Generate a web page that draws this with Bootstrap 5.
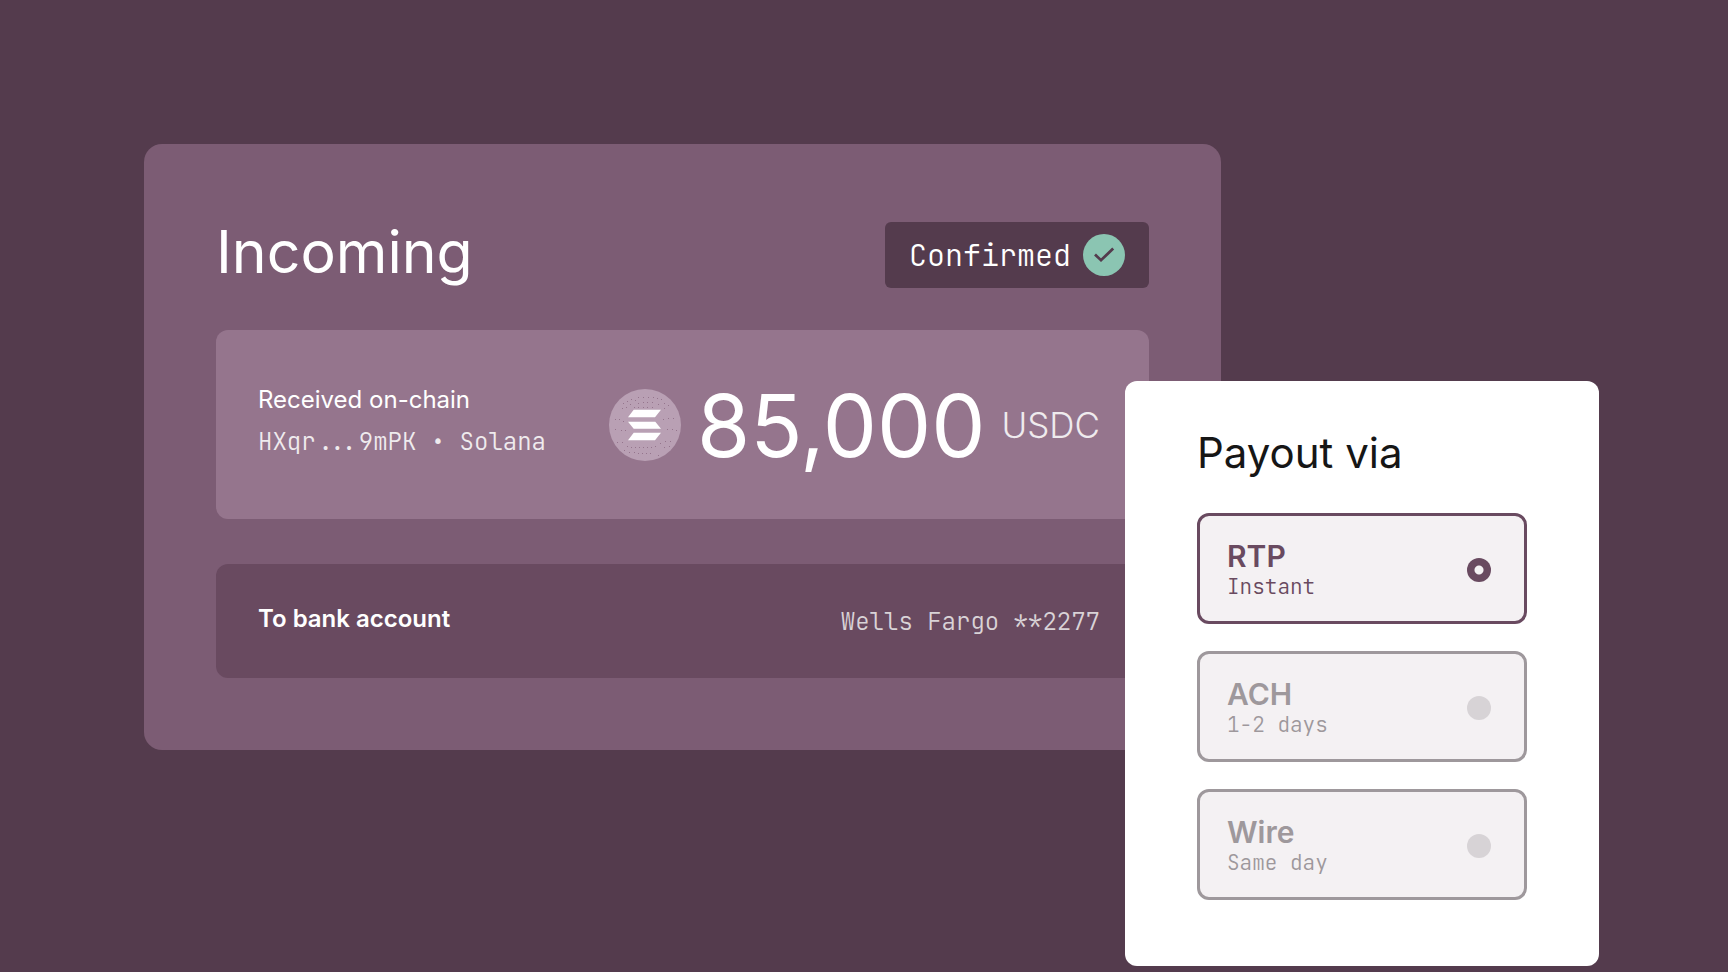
<!DOCTYPE html>
<html lang="en">
<head>
<meta charset="utf-8">
<meta name="viewport" content="width=device-width, initial-scale=1">
<title>Payout</title>
<link href="https://cdn.jsdelivr.net/npm/bootstrap@5.3.0/dist/css/bootstrap.min.css" rel="stylesheet">
<style>
  :root {
    --plum-900: #543b4d;
    --plum-700: #694a60;
    --plum-500: #7c5c74;
    --plum-400: #95758d;
    --mint: #8bc5b2;
    --muted: #9e989c;
  }
  body { background: var(--plum-900); font-family: Inter, "Liberation Sans", sans-serif; color: #fff; }
  .mono { font-family: "JetBrains Mono", "DejaVu Sans Mono", monospace; font-weight: 300; }

  /* The payout card shares the middle column with the incoming card. */
  .stage { display: grid; grid-template-columns: 981fr 96fr 378fr; align-items: start; padding: 144px 129px 6px 144px; }
  .incoming { grid-area: 1 / 1 / 2 / 3; background: var(--plum-500); border-radius: 18px; padding: 78px 72px 72px; }
  .payout { grid-area: 1 / 2 / 2 / 4; z-index: 1; margin-top: 237px; background: #fff; border-radius: 12px; padding: 48px 72px 66px; }

  .incoming-title { font-size: 59px; line-height: 60px; font-weight: 400; }
  .status { background: var(--plum-900); border-radius: 6px; padding: 12px 24px; gap: 12px; font-size: 30px; line-height: 42px; }
  .received { background: var(--plum-400); border-radius: 12px; margin-top: 42px; padding: 51px 49px 51px 42px; }
  .label-line { font-size: 24px; line-height: 38px; }
  .address { font-size: 24px; line-height: 38px; margin-top: 4px; color: #efebee; }
  .amount { font-size: 86px; line-height: 83px; padding-top: 4px; }
  .currency { font-size: 35px; line-height: 48px; font-weight: 300; color: #efebee; }
  .bank { background: var(--plum-700); border-radius: 12px; margin-top: 45px; padding: 39px 49px 37px 42px; font-size: 24px; }
  .bank-label { line-height: 32px; font-weight: 600; }
  .bank-name { line-height: 38px; color: #d9d3d7; }

  .payout-title { font-size: 42px; line-height: 48px; font-weight: 400; color: #161616; margin-bottom: 36px; }
  .options { gap: 27px; }
  .option { background: #f4f1f3; border: 3px solid var(--muted); border-radius: 12px; padding: 23px 33px 20px 27px; color: var(--muted); cursor: pointer; }
  .option:has(:checked) { border-color: var(--plum-700); color: var(--plum-700); }
  .option-name { font-size: 30px; line-height: 34px; font-weight: 600; }
  .option-time { font-size: 21px; line-height: 28px; }
  .option-radio { appearance: none; width: 24px; height: 24px; margin: 0; border-radius: 50%; background: #d7d3d6; }
  .option-radio:checked { background: radial-gradient(circle, #f4f1f3 4px, var(--plum-700) 5px); }
</style>
</head>
<body>
<main class="stage">
  <section class="incoming">
    <div class="d-flex justify-content-between align-items-start">
      <h1 class="incoming-title m-0">Incoming</h1>
      <div class="status mono d-flex align-items-center">
        <span>Confirmed</span>
        <svg width="42" height="42" viewBox="0 0 42 42" aria-hidden="true">
          <circle cx="21" cy="21" r="21" fill="#8bc5b2"/>
          <path d="M12 20.6 18 26.2 30.2 14.6" fill="none" stroke="#543b4d" stroke-width="2.8"/>
        </svg>
      </div>
    </div>

    <div class="received d-flex justify-content-between align-items-center">
      <div class="align-self-start">
        <div class="label-line">Received on-chain</div>
        <div class="address mono">HXqr...9mPK • Solana</div>
      </div>
      <div class="d-flex align-items-center">
        <svg width="72" height="72" viewBox="0 0 72 72" class="flex-shrink-0" aria-hidden="true">
          <circle cx="36" cy="36" r="36" fill="#b9a0b4"/>
          <path fill="none" stroke="#95758d" d="M29 8.500h1M34 8.500h1M39 8.500h1M44 8.500h1M48 9.500h1M52 10.500h1M22 10.500h1M18 12.500h1M26 11.500h1M14 14.500h1M21 15.500h1M29 14.500h1M34 13.500h1M38 13.500h1M43 13.500h1M49 15.500h1M55 14.500h1M59 16.500h1M13 19.500h1M17 18.500h1M25 18.500h1M29 18.500h1M34 18.500h1M38 18.500h1M43 18.500h1M55 19.500h1M6 30.500h1M10 30.500h1M14 32.500h1M54 30.500h1M59 29.500h1M64 29.500h1M6 40.500h1M12 41.500h1M16 41.500h1M58 40.500h1M63 40.500h1M67 41.500h1M8 53.500h1M13 53.500h1M51 54.500h1M56 52.500h1M61 52.500h1M18 57.500h1M22 58.500h1M26 58.500h1M30 58.500h1M34 58.500h1M38 58.500h1M42 58.500h1M46 57.500h1M55 58.500h1M60 57.500h1M15 61.500h1M20 63.500h1M25 63.500h1M29 64.500h1M33 64.500h1M37 64.500h1M41 64.500h1M49 66.500h1"/>
          <path d="M24.700 20.700H52L46 28.300H19ZM19 32.700H46.300L52 39.700H24.700ZM24.700 43.700H52L46 51.300H19Z" fill="#fff"/>
        </svg>
        <span class="amount ms-3">85,000</span>
        <span class="currency ms-3">USDC</span>
      </div>
    </div>

    <div class="bank d-flex justify-content-between align-items-start">
      <div class="bank-label">To bank account</div>
      <div class="bank-name mono">Wells Fargo **2277</div>
    </div>
  </section>

  <section class="payout">
    <h2 class="payout-title">Payout via</h2>
    <div class="options d-flex flex-column">
      <label class="option d-flex justify-content-between align-items-center" for="rtp">
        <span><span class="option-name d-block">RTP</span><span class="option-time mono d-block">Instant</span></span>
        <input class="option-radio" type="radio" name="payout" id="rtp" checked>
      </label>
      <label class="option d-flex justify-content-between align-items-center" for="ach">
        <span><span class="option-name d-block">ACH</span><span class="option-time mono d-block">1-2 days</span></span>
        <input class="option-radio" type="radio" name="payout" id="ach">
      </label>
      <label class="option d-flex justify-content-between align-items-center" for="wire">
        <span><span class="option-name d-block">Wire</span><span class="option-time mono d-block">Same day</span></span>
        <input class="option-radio" type="radio" name="payout" id="wire">
      </label>
    </div>
  </section>
</main>
<script src="https://cdn.jsdelivr.net/npm/bootstrap@5.3.0/dist/js/bootstrap.bundle.min.js"></script>
</body>
</html>
